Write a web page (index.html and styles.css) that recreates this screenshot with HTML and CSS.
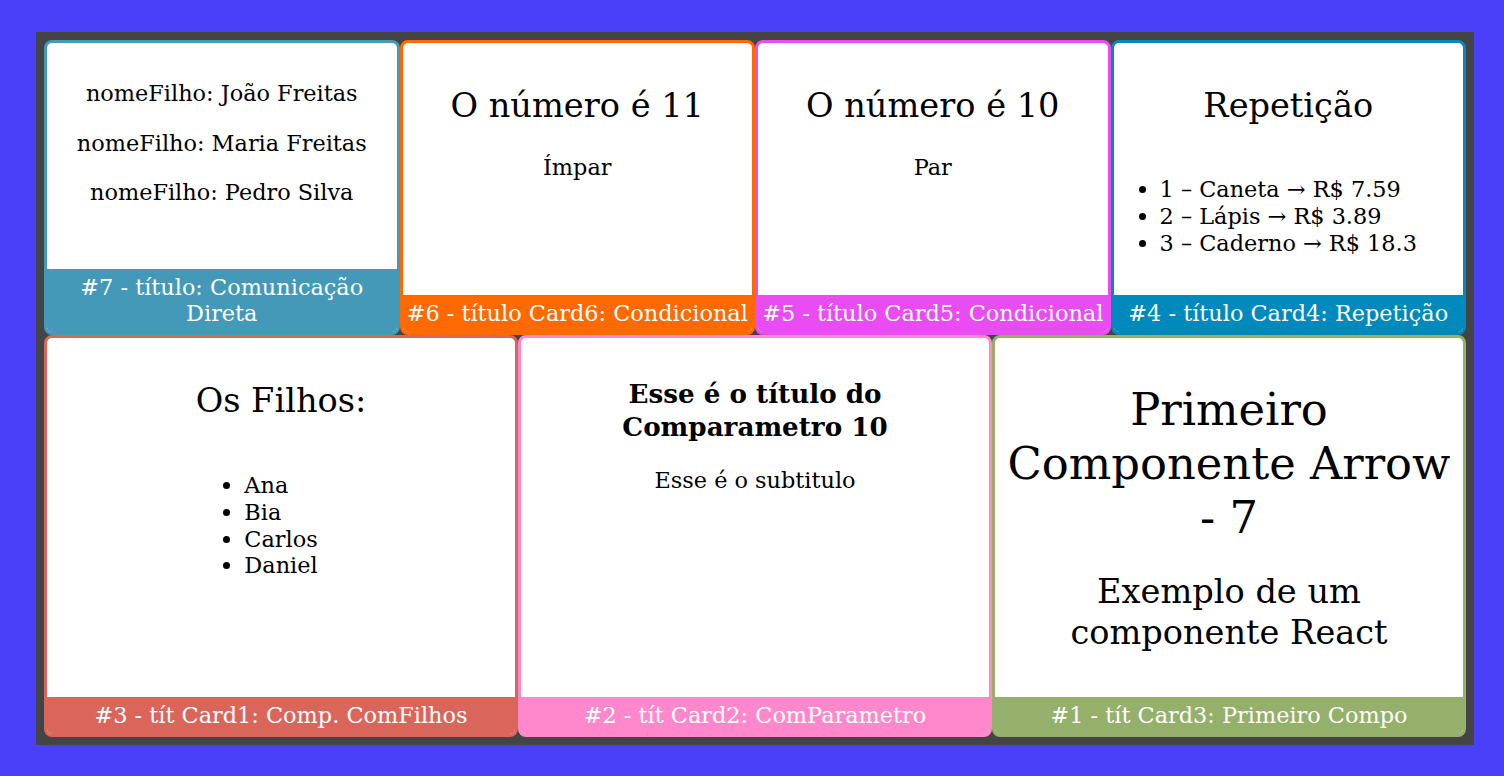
FILE: index.html
```html
<!DOCTYPE html>
<html lang="pt-BR">
<head>
<meta charset="utf-8">
<title>Cards</title>
<link rel="stylesheet" href="styles.css">
</head>
<body>
<div class="page">
  <div class="board">
    <div class="card c7">
      <div class="card-body">
        <p>nomeFilho: João Freitas</p>
        <p>nomeFilho: Maria Freitas</p>
        <p>nomeFilho: Pedro Silva</p>
      </div>
      <div class="card-footer">#7 - título: Comunicação Direta</div>
    </div>
    <div class="card c6">
      <div class="card-body">
        <h2>O número é 11</h2>
        <p>Ímpar</p>
      </div>
      <div class="card-footer">#6 - título Card6: Condicional</div>
    </div>
    <div class="card c5">
      <div class="card-body">
        <h2>O número é 10</h2>
        <p>Par</p>
      </div>
      <div class="card-footer">#5 - título Card5: Condicional</div>
    </div>
    <div class="card c4">
      <div class="card-body">
        <h2>Repetição</h2>
        <ul class="list">
          <li>1 – Caneta → R$ 7.59</li>
          <li>2 – Lápis → R$ 3.89</li>
          <li>3 – Caderno → R$ 18.3</li>
        </ul>
      </div>
      <div class="card-footer">#4 - título Card4: Repetição</div>
    </div>
    <div class="card c3">
      <div class="card-body">
        <h2>Os Filhos:</h2>
        <ul class="list">
          <li>Ana</li>
          <li>Bia</li>
          <li>Carlos</li>
          <li>Daniel</li>
        </ul>
      </div>
      <div class="card-footer">#3 - tít Card1: Comp. ComFilhos</div>
    </div>
    <div class="card c2">
      <div class="card-body">
        <h3>Esse é o título do Comparametro 10</h3>
        <p>Esse é o subtitulo</p>
      </div>
      <div class="card-footer">#2 - tít Card2: ComParametro</div>
    </div>
    <div class="card c1">
      <div class="card-body">
        <h1>Primeiro Componente Arrow - 7</h1>
        <h2>Exemplo de um componente React</h2>
      </div>
      <div class="card-footer">#1 - tít Card3: Primeiro Compo</div>
    </div>
  </div>
</div>
</body>
</html>
```

FILE: styles.css
```css
html, body {
  margin: 0;
  background: #4a40f9;
}

body {
  font-family: "DejaVu Serif", serif;
  font-size: 22.4px;
  line-height: 1.2;
  color: #000;
}

.page {
  padding: 32px 30px 30px 36px;
}

.board {
  background: #444444;
  padding: 8px;
  display: flex;
  flex-wrap: wrap;
}

.card {
  flex: 1 1 300px;
  display: flex;
  flex-direction: column;
  background: #fff;
  border: 3px solid var(--c);
  border-radius: 8px;
}

.card-body {
  flex: 1;
  padding: 15px 12px 16px;
  text-align: center;
}

.card-body h1,
.card-body h2 {
  font-weight: normal;
}

.card-body h1 {
  margin-bottom: 24px;
}

.card-body h3 {
  margin: 0.9em 0;
  line-height: 33px;
}

.card-footer {
  background: var(--c);
  color: #fff;
  text-align: center;
  padding: 5px 3px;
  border-radius: 0 0 5px 5px;
}

.list {
  display: inline-block;
  text-align: left;
  padding: 0;
}

.c7 { --c: #4499b8; }
.c6 { --c: #fe6a00; }
.c5 { --c: #e84cf2; }
.c4 { --c: #0089bc; }
.c3 { --c: #da665b; }
.c2 { --c: #ff88cc; }
.c1 { --c: #94b06a; }
```
